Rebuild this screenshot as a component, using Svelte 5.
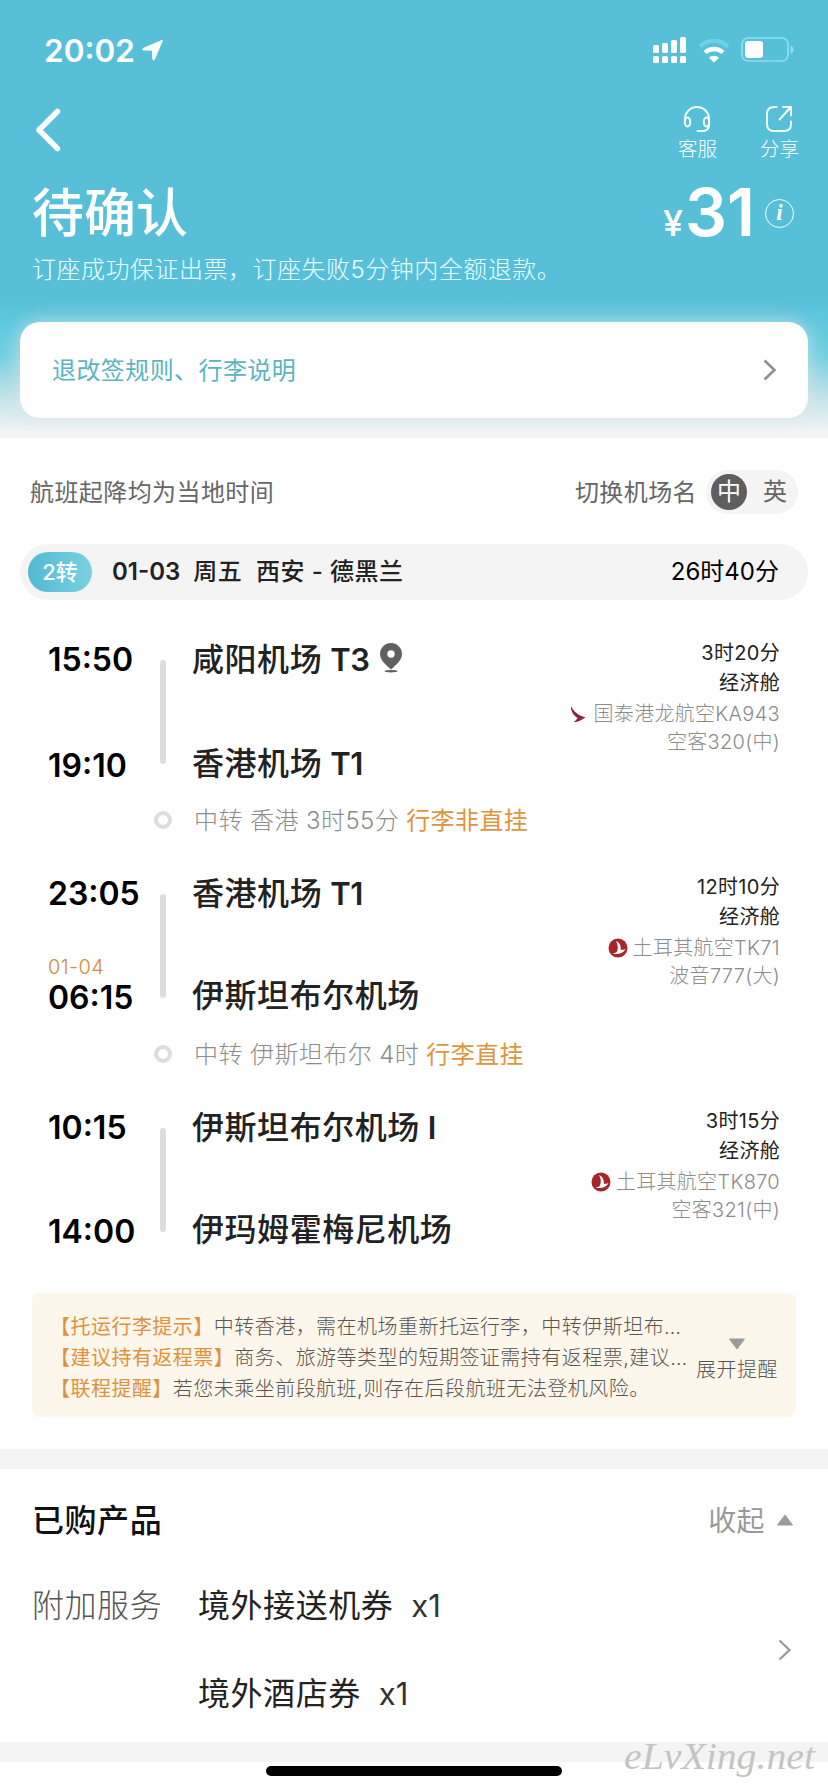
<script lang="ts">
	type Leg = {
		depart: string;
		from: string;
		fromTerminal?: string;
		pin?: boolean;
		date?: string;
		arrive: string;
		to: string;
		toTerminal?: string;
		duration: string;
		cabin: string;
		airline: string;
		logo: 'swoosh' | 'bird';
		plane: string;
		transfer?: string;
		baggage?: string;
	};

	const legs: Leg[] = [
		{
			depart: '15:50', from: '咸阳机场', fromTerminal: 'T3', pin: true,
			arrive: '19:10', to: '香港机场', toTerminal: 'T1',
			duration: '3时20分', cabin: '经济舱', airline: '国泰港龙航空KA943', logo: 'swoosh', plane: '空客320(中)',
			transfer: '中转 香港 3时55分', baggage: '行李非直挂'
		},
		{
			depart: '23:05', from: '香港机场', fromTerminal: 'T1',
			date: '01-04', arrive: '06:15', to: '伊斯坦布尔机场',
			duration: '12时10分', cabin: '经济舱', airline: '土耳其航空TK71', logo: 'bird', plane: '波音777(大)',
			transfer: '中转 伊斯坦布尔 4时', baggage: '行李直挂'
		},
		{
			depart: '10:15', from: '伊斯坦布尔机场', fromTerminal: 'I',
			arrive: '14:00', to: '伊玛姆霍梅尼机场',
			duration: '3时15分', cabin: '经济舱', airline: '土耳其航空TK870', logo: 'bird', plane: '空客321(中)'
		}
	];

	const notices = [
		{ tag: '【托运行李提示】', text: '中转香港，需在机场重新托运行李，中转伊斯坦布…' },
		{ tag: '【建议持有返程票】', text: '商务、旅游等类型的短期签证需持有返程票,建议…' },
		{ tag: '【联程提醒】', text: '若您未乘坐前段航班,则存在后段航班无法登机风险。' }
	];

	const products = [
		{ name: '境外接送机券', count: 1 },
		{ name: '境外酒店券', count: 1 }
	];

	let lang = $state('中');
</script>

<div class="page" lang="zh-CN">
	<header class="header">
		<div class="status">
			<span class="clock">20:02</span>
			<svg class="locate" width="22" height="22" viewBox="0 0 22 22"><path d="M20.5 1.2 1.2 9.4c-.9.5-.6 1.5.3 1.5l9 .3.3 8.8c.1 1 1.3 1.2 1.7.3z" fill="#fff" stroke="#fff" stroke-linejoin="round" /></svg>
			<div class="status-icons">
				<svg width="34" height="27" viewBox="0 0 34 27" fill="#fff">
					<rect x="0" y="8" width="6" height="8" rx="1.5" /><rect x="9" y="6" width="6" height="10" rx="1.5" /><rect x="18" y="3" width="6" height="13" rx="1.5" /><rect x="27" y="0" width="6" height="16" rx="1.5" />
					<rect x="0" y="19" width="6" height="7" rx="1.5" /><rect x="9" y="19" width="6" height="7" rx="1.5" /><rect x="18" y="19" width="6" height="7" rx="1.5" /><rect x="27" y="19" width="6" height="7" rx="1.5" />
				</svg>
				<svg class="wifi" width="32" height="24" viewBox="0 0 32 24" fill="none">
					<path d="M2 7.5a20 20 0 0 1 28 0" stroke="#6fd3e8" stroke-width="4" />
					<path d="M7 13.500a13 13 0 0 1 18 0" stroke="#fff" stroke-width="4.5" />
					<path d="M16 23.500 11 18.700a7.400 7.400 0 0 1 10 0z" fill="#fff" />
				</svg>
				<svg class="battery" width="54" height="26" viewBox="0 0 54 26">
					<rect x="1" y="1" width="46" height="23" rx="6" fill="none" stroke="#8be0ee" stroke-width="1.7" />
					<rect x="4" y="4" width="18" height="17" rx="3" fill="#fff" />
					<path d="M49.500 8.500q3 1 3 4t-3 4z" fill="#8be0ee" />
				</svg>
			</div>
		</div>

		<div class="nav">
			<svg class="back" width="26" height="44" viewBox="0 0 26 44"><path d="M22.500 3.500 4 22l18.500 18.500" fill="none" stroke="#fff" stroke-width="5.5" stroke-linecap="round" stroke-linejoin="round" /></svg>
			<div class="actions">
				<div class="action">
					<svg width="28" height="28" viewBox="0 0 28 28" fill="none" stroke="#f4ffff" stroke-width="2" stroke-linecap="round">
						<path d="M2 17v-3a12 12 0 0 1 24 0v5.500q0 6.500-6.500 6.500H14.500" />
						<ellipse cx="4.500" cy="17" rx="2.700" ry="4.500" /><ellipse cx="23.500" cy="17" rx="2.700" ry="4.500" />
					</svg>
					<span>客服</span>
				</div>
				<div class="action">
					<svg width="28" height="28" viewBox="0 0 28 28" fill="none" stroke="#f4ffff" stroke-width="2" stroke-linecap="round" stroke-linejoin="round">
						<path d="M11.500 2H9Q2 2 2 9v10q0 7 7 7h10q7 0 7-7v-2.500" />
						<path d="M14.500 14.500 25.500 2.500M18 2h8v8.500" />
					</svg>
					<span>分享</span>
				</div>
			</div>
		</div>

		<div class="headline">
			<h1>待确认</h1>
			<div class="price">
				<span class="yen">¥</span><span class="amount">31</span>
				<span class="info">i</span>
			</div>
		</div>
		<p class="subtitle">订座成功保证出票，订座失败5分钟内全额退款。</p>

		<a class="rules" href="#rules">
			<span>退改签规则、行李说明</span>
			<svg width="14" height="22" viewBox="0 0 14 22"><path d="m1.500 1.500 10 9.500-10 9.500" fill="none" stroke="#8e8e8e" stroke-width="2.5" /></svg>
		</a>
	</header>

	<section class="flights">
		<div class="tips">
			<span class="tip">航班起降均为当地时间</span>
			<div class="switch">
				<span class="tip">切换机场名</span>
				<div class="toggle">
					{#each ['中', '英'] as name}
						<button class:active={lang === name} onclick={() => (lang = name)}>{name}</button>
					{/each}
				</div>
			</div>
		</div>

		<div class="route">
			<span class="badge">2转</span>
			<span class="day">01-03</span>
			<span class="week">周五</span>
			<span class="cities">西安 - 德黑兰</span>
			<span class="total">26时40分</span>
		</div>

		<div class="legs">
			{#each legs as leg}
				<div class="leg">
					<div class="times">
						<span class="time">{leg.depart}</span>
						<div>
							{#if leg.date}<span class="date">{leg.date}</span>{/if}
							<span class="time">{leg.arrive}</span>
						</div>
					</div>
					<div class="line"></div>
					<div class="airports">
						<div class="airport" class:pinned={leg.pin}>
							<span>{leg.from}</span>
							{#if leg.fromTerminal}<span class="terminal">{leg.fromTerminal}</span>{/if}
							{#if leg.pin}
								<svg width="22" height="30" viewBox="0 0 22 30" fill="#606060">
									<path fill-rule="evenodd" d="M11 0a11 11 0 0 1 11 11c0 6-5.500 10.500-11 15.500C5.500 21.500 0 17 0 11A11 11 0 0 1 11 0zm0 7.300a3.700 3.700 0 1 0 0 7.400 3.700 3.700 0 0 0 0-7.400z" />
									<ellipse cx="11" cy="28.200" rx="6.500" ry="1.200" />
								</svg>
							{/if}
						</div>
						<div class="airport">
							<span>{leg.to}</span>
							{#if leg.toTerminal}<span class="terminal">{leg.toTerminal}</span>{/if}
						</div>
					</div>
					<div class="detail">
						<span>{leg.duration}</span>
						<span>{leg.cabin}</span>
						<span class="airline">
							{#if leg.logo === 'swoosh'}
								<svg class="swoosh" width="16" height="17" viewBox="0 0 16 17"><path d="M1 0c2 5 7 9.500 14.500 11.200C11 14.500 7.500 16.500 3.500 16c2-1.500 3.500-2.700 4-4C3.500 9.500.500 5 1 0z" fill="#8c2647" /></svg>
							{:else}
								<svg class="bird" width="20" height="20" viewBox="0 0 20 20">
									<circle cx="10" cy="10" r="9.500" fill="#a9252c" />
									<path d="M8 3c4 1.500 5.200 5.500 4.700 8.800 1.700.2 3.300-.1 4.800-.8-2 4-7 6-13 4.700 2.500-.4 4-1.400 4.700-2.700C10.500 9.500 9.500 6 8 3z" fill="#fff" />
								</svg>
							{/if}
							{leg.airline}
						</span>
						<span class="plane">{leg.plane}</span>
					</div>
				</div>
				{#if leg.transfer}
					<div class="transfer">
						<i class="dot"></i>
						<div class="transfer-text">
							<span>{leg.transfer}</span>
							<span class="baggage">{leg.baggage}</span>
						</div>
					</div>
				{/if}
			{/each}
		</div>

		<div class="notice">
			<div class="notice-list">
				{#each notices as notice}
					<p><span class="tag">{notice.tag}</span>{notice.text}</p>
				{/each}
			</div>
			<div class="expand">
				<svg width="18" height="12" viewBox="0 0 18 12"><path d="M1.500 1h15L9 11z" fill="#9b9b9b" stroke="#9b9b9b" stroke-linejoin="round" /></svg>
				<span>展开提醒</span>
			</div>
		</div>
	</section>

	<section class="bought">
		<div class="bought-head">
			<h2>已购产品</h2>
			<div class="collapse">
				<span>收起</span>
				<svg width="18" height="12" viewBox="0 0 18 12"><path d="M1.500 11h15L9 1z" fill="#9b9b9b" stroke="#9b9b9b" stroke-linejoin="round" /></svg>
			</div>
		</div>
		<div class="bought-body">
			<span class="label">附加服务</span>
			<ul>
				{#each products as product}
					<li><span>{product.name}</span><span class="count">x{product.count}</span></li>
				{/each}
			</ul>
			<svg width="14" height="22" viewBox="0 0 14 22"><path d="m1.500 1.500 10 9.500-10 9.500" fill="none" stroke="#999" stroke-width="2.3" /></svg>
		</div>
	</section>

	<footer class="bottom">
		<div class="home-bar"></div>
	</footer>
	<svg class="watermark" width="204" height="50" viewBox="0 0 204 50"><text x="3" y="33" textLength="191" lengthAdjust="spacingAndGlyphs">eLvXing.net</text></svg>
</div>

<style>
	:global(body) {
		background: #f4f4f4;
	}

	.page {
		position: relative;
		width: 828px;
		height: 1792px;
		overflow: hidden;
		display: flex;
		flex-direction: column;
		gap: 20px;
		background: #f4f4f4;
		font-family: Inter, 'Noto Sans CJK SC', sans-serif;
		font-size: 24px;
		letter-spacing: 0.42px;
		color: #222;
		white-space: nowrap;
	}

	svg {
		display: block;
		flex: none;
	}

	h1,
	h2,
	p,
	ul {
		margin: 0;
		padding: 0;
		list-style: none;
	}

	.header {
		height: 438px;
		margin-bottom: -20px;
		box-sizing: border-box;
		padding: 32px 20px 20px;
		background: linear-gradient(#58bfd9 0, #58bfd9 298px, #61cade 330px, #72cfe0 355px, #c6e4ea 400px, #f3f4f5 432px);
		color: #fff;
	}

	.status {
		display: flex;
		align-items: center;
		height: 36px;
		padding: 0 13px 0 24px;
	}

	.clock {
		font-size: 31.5px;
		font-weight: 600;
		letter-spacing: 0;
	}

	.locate {
		margin-left: 7px;
	}

	.status-icons {
		display: flex;
		align-items: center;
		margin-left: auto;
		gap: 11px;
	}

	.wifi {
		margin-top: 2px;
	}

	.nav {
		display: flex;
		justify-content: space-between;
		height: 92px;
		padding: 0 9px 0 15px;
	}

	.back {
		margin-top: 40px;
	}

	.actions {
		display: flex;
		gap: 43px;
		padding-top: 37px;
	}

	.action {
		display: flex;
		flex-direction: column;
		align-items: center;
		font-size: 19.5px;
		font-weight: 300;
		letter-spacing: 0;
		line-height: 32px;
	}

	.headline {
		display: flex;
		align-items: center;
		justify-content: space-between;
		height: 92px;
		padding: 15px 14px 0 12px;
		box-sizing: border-box;
	}

	h1 {
		font-size: 52px;
		font-weight: 500;
		letter-spacing: 0;
		line-height: 60px;
	}

	.price {
		display: flex;
		align-items: baseline;
		padding-top: 7px;
		font-weight: 500;
		letter-spacing: 0;
		line-height: 60px;
	}

	.yen {
		font-size: 36px;
	}

	.amount {
		font-size: 66px;
		font-weight: 600;
		margin-left: 2px;
	}

	.info {
		align-self: center;
		width: 27px;
		height: 27px;
		margin: 0 0 7px 10px;
		border: 1.5px solid #f4ffff;
		border-radius: 50%;
		font: italic bold 23px/25px 'Liberation Serif', serif;
		text-align: center;
	}

	.subtitle {
		padding-left: 12px;
		font-weight: 300;
		letter-spacing: 0.5px;
		line-height: 36px;
		color: #eaffff;
	}

	.rules {
		display: flex;
		align-items: center;
		justify-content: space-between;
		height: 96px;
		margin-top: 34px;
		padding: 0 31px 0 32px;
		border-radius: 20px;
		background: #fff;
		box-shadow: 0 0 20px rgba(225, 232, 235, 0.75);
		color: #5ab5bf;
		text-decoration: none;
	}

	.rules span,
	.tip {
		padding-bottom: 3px;
	}

	.flights {
		height: 1011px;
		background: #fff;
	}

	.tips {
		display: flex;
		align-items: center;
		justify-content: space-between;
		height: 108px;
		padding: 0 30px;
		margin-bottom: -2px;
		color: #666;
	}

	.switch {
		display: flex;
		align-items: center;
		gap: 9px;
	}

	.toggle {
		display: flex;
		align-items: center;
		gap: 10px;
		padding: 4px 5px;
		border-radius: 22px;
		background: #f4f4f4;
	}

	.toggle button {
		width: 36px;
		height: 36px;
		padding: 0;
		border: none;
		border-radius: 50%;
		background: none;
		color: #666;
		font: inherit;
		line-height: 36px;
	}

	.toggle .active {
		background: #5e5e5e;
		color: #fff;
	}

	.route {
		display: flex;
		align-items: center;
		height: 56px;
		margin: 0 20px;
		padding: 0 29px 0 8px;
		box-sizing: border-box;
		border-radius: 28px;
		background: #f4f4f4;
		font-weight: 500;
		line-height: 36px;
	}

	.badge {
		width: 64px;
		height: 40px;
		border-radius: 20px;
		background: linear-gradient(90deg, #53b9d4, #79d2df);
		color: #fff;
		font-size: 22px;
		letter-spacing: 0;
		line-height: 40px;
		text-align: center;
	}

	.day {
		margin-left: 20px;
		font-weight: 600;
		letter-spacing: 0;
	}

	.week {
		margin-left: 13px;
	}

	.cities {
		margin-left: 14px;
	}

	.total {
		margin-left: auto;
		font-weight: 400;
		letter-spacing: 0;
		color: #000;
	}

	.legs {
		padding: 36px 48px 0 48px;
	}

	.leg {
		display: grid;
		grid-template-columns: 112px 6px 1fr auto;
		height: 148px;
	}

	.times {
		display: flex;
		flex-direction: column;
		justify-content: space-between;
		margin: 2px 0 -2px;
	}

	.time {
		display: block;
		font-size: 32px;
		font-weight: 600;
		letter-spacing: 0;
		line-height: 44px;
		color: #000;
	}

	.date {
		display: block;
		margin-bottom: 2px;
		font-size: 20px;
		font-weight: 300;
		line-height: 14px;
		color: #d68a35;
	}

	.line {
		height: 104px;
		margin-top: 24px;
		border-radius: 3px;
		background: #ddd;
	}

	.airports {
		display: flex;
		flex-direction: column;
		gap: 58px;
		padding: 2px 0 0 26px;
		font-size: 32px;
		font-weight: 500;
		letter-spacing: 0.55px;
		line-height: 44px;
	}

	.airport {
		display: flex;
		height: 44px;
	}

	.airport svg {
		margin: 5px 0 0 10px;
	}

	.pinned {
		height: 46px;
	}

	.terminal {
		margin-left: 8px;
		font-size: 31px;
		font-weight: 600;
		letter-spacing: -0.3px;
	}

	.detail {
		display: flex;
		flex-direction: column;
		align-items: flex-end;
		padding-top: 2px;
		font-size: 20px;
		letter-spacing: 0.3px;
		line-height: 30px;
	}

	.airline {
		display: flex;
		align-items: center;
		line-height: 32px;
		font-weight: 300;
		color: #8c8c8c;
	}

	.swoosh {
		margin-right: 8px;
	}

	.bird {
		margin-right: 5px;
	}

	.plane {
		line-height: 24px;
		font-weight: 300;
		color: #8c8c8c;
	}

	.transfer {
		display: flex;
		align-items: center;
		height: 86px;
		padding: 0 0 14px 106px;
		box-sizing: border-box;
		font-weight: 300;
		color: #8c8c8c;
	}

	.transfer-text {
		display: flex;
		padding-bottom: 3px;
	}

	.dot {
		width: 10px;
		height: 10px;
		margin-right: 22px;
		border: 4px solid #ddd;
		border-radius: 50%;
	}

	.baggage {
		margin-left: 7px;
		font-weight: 400;
		color: #de9540;
	}

	.notice {
		display: flex;
		justify-content: space-between;
		height: 124px;
		margin: 41px 32px 0;
		padding: 19px 18px 0 18px;
		box-sizing: border-box;
		border-radius: 8px;
		background: #fdf6ea;
		font-size: 20px;
		font-weight: 300;
		letter-spacing: 0.47px;
		line-height: 30.8px;
		color: #5a5550;
	}

	.tag {
		font-weight: 400;
		color: #dc9340;
	}

	.expand {
		display: flex;
		flex-direction: column;
		align-items: center;
		gap: 5px;
		padding-top: 26px;
		color: #555;
	}

	.bought {
		height: 273px;
		background: #fff;
	}

	.bought-head {
		display: flex;
		align-items: center;
		justify-content: space-between;
		height: 100px;
		padding: 0 34px 0 32px;
	}

	h2 {
		padding-bottom: 3px;
		font-size: 32px;
		font-weight: 500;
		letter-spacing: 0.55px;
		color: #111;
	}

	.collapse {
		display: flex;
		align-items: center;
		gap: 11px;
		font-size: 28px;
		color: #999;
	}

	.collapse svg {
		margin-top: 2px;
	}

	.bought-body {
		display: flex;
		padding: 1px 36px 0 32px;
		font-size: 32px;
		letter-spacing: 0.55px;
	}

	.label {
		width: 166px;
		font-weight: 300;
		line-height: 72px;
		color: #555;
	}

	ul {
		flex: 1;
		display: flex;
		flex-direction: column;
		gap: 16px;
	}

	li {
		display: flex;
		gap: 18px;
		line-height: 72px;
	}

	.count {
		font-size: 31px;
		letter-spacing: 0;
		color: #333;
	}

	.bought-body svg {
		margin-top: 69px;
	}

	.bottom {
		flex: 1;
		padding-top: 4px;
		background: #fff;
	}

	.home-bar {
		width: 296px;
		height: 10px;
		margin: 0 auto;
		border-radius: 5px;
		background: #000;
	}

	.watermark {
		position: absolute;
		right: 3px;
		bottom: 6px;
		overflow: visible;
		fill: #c4c4c4;
		font: italic 37px 'Liberation Serif', cursive;
		letter-spacing: 0;
	}
</style>
